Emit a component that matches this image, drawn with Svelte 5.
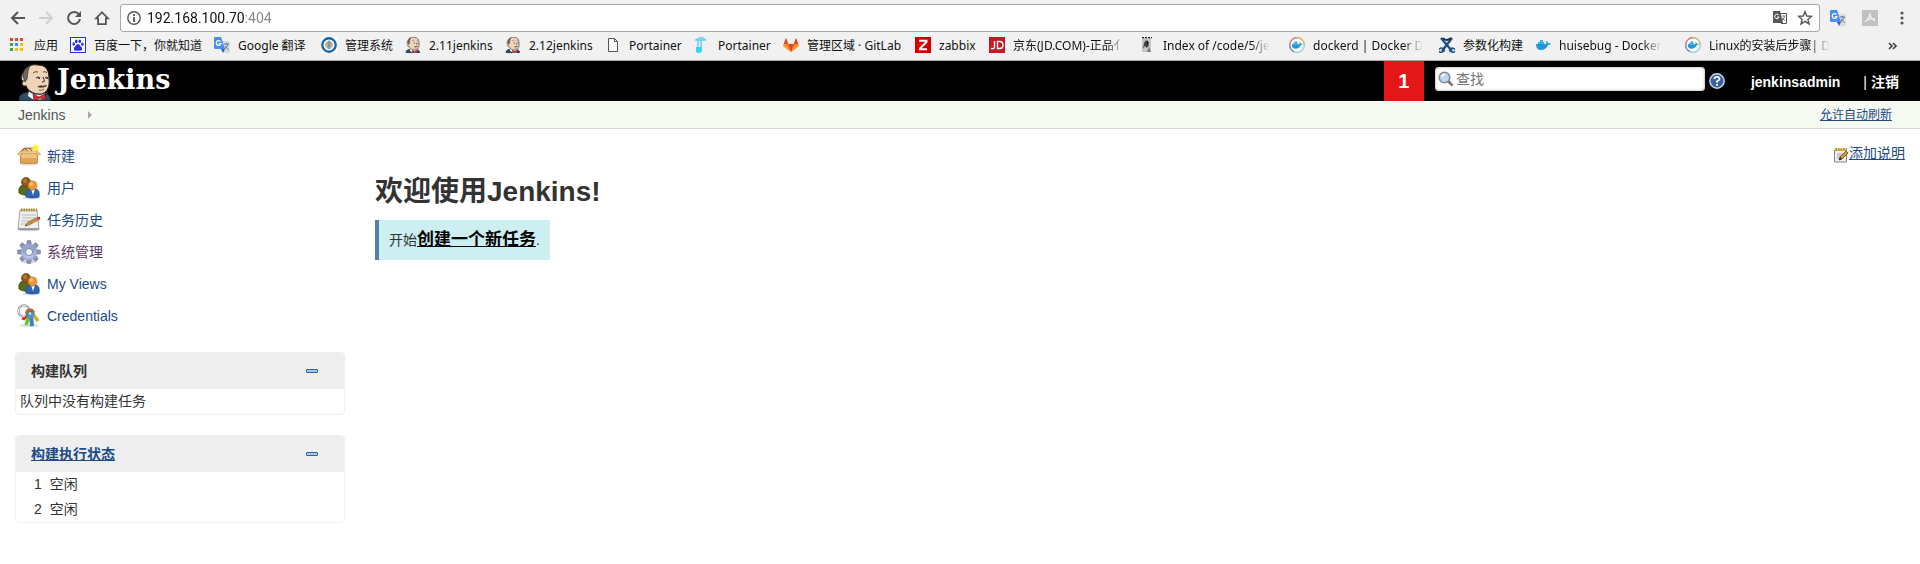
<script>
  const bookmarks = [
    { icon: 'apps', label: '应用', width: 60 },
    { icon: 'baidu', label: '百度一下，你就知道', width: 144 },
    { icon: 'translate', label: 'Google 翻译', width: 107 },
    { icon: 'badge', label: '管理系统', width: 84 },
    { icon: 'jenkins', label: '2.11jenkins', width: 100 },
    { icon: 'jenkins', label: '2.12jenkins', width: 100 },
    { icon: 'page', label: 'Portainer', width: 89 },
    { icon: 'portainer', label: 'Portainer', width: 89 },
    { icon: 'gitlab', label: '管理区域 · GitLab', width: 132 },
    { icon: 'zabbix', label: 'zabbix', width: 74 },
    { icon: 'jd', label: '京东(JD.COM)-正品亻', width: 150, fade: true },
    { icon: 'photo', label: 'Index of /code/5/je', width: 150, fade: true },
    { icon: 'dockerRing', label: 'dockerd | Docker D', width: 150, fade: true },
    { icon: 'tools', label: '参数化构建', width: 96 },
    { icon: 'docker', label: 'huisebug - Docker', width: 150, fade: true },
    { icon: 'dockerRing', label: 'Linux的安装后步骤| D', width: 150, fade: true }
  ];
  const tasks = [
    { icon: 'box', label: '新建' },
    { icon: 'users', label: '用户' },
    { icon: 'notepad', label: '任务历史' },
    { icon: 'gear', label: '系统管理', visited: true },
    { icon: 'users', label: 'My Views' },
    { icon: 'keys', label: 'Credentials' }
  ];
  const executors = [1, 2];
  const appColors = ['#ea4335', '#ea4335', '#ea4335', '#34a853', '#4285f4', '#fbbc05', '#34a853', '#fbbc05', '#fbbc05'];
  const teeth = [0, 45, 90, 135, 180, 225, 270, 315];
</script>

{#snippet butler()}
  <path d="M0 37V33Q2 29 9 28L13 33 25 33 27 29Q31 31 32 37Z" fill="#2f4c62" stroke="#16242e" />
  <path d="M10 26L9 32 15 36 25 35 26 28Z" fill="#fff" />
  <path d="M4 17C1 16 2 10 5 8C6 2 13 0 19 1C27 1 30 6 30 14C31 22 29 28 23 30C16 31 9 28 7 22C3 23 2 19 4 17Z" fill="#efd4b8" stroke="#231f20" stroke-width="1.2" />
  <path d="M5 15C2 10 5 5 11 2C8 7 9 11 8 15L6 18Z" fill="#6b6862" stroke="#302d2a" stroke-width=".7" />
  <path d="M14 9Q16 7 19 8M24 8Q27 7 28 9" fill="none" stroke="#5b4638" />
  <path d="M17 14Q19 12 21 14M26 14Q27 12 29 14M24 13Q27 19 23 18" fill="none" stroke="#231f20" stroke-width="1" />
  <circle cx="20" cy="14.4" r=".7" /><circle cx="28" cy="14.4" r=".7" />
  <path d="M18 23Q22 20 24 22Q27 20 28 22Q24 25 18 23Z" fill="#49413c" />
  <path d="M20 26Q23 27 25 25" fill="none" stroke="#8b5e42" />
  <path d="M14 30L20 33 26 30 27 36 21 34 15 37Z" fill="#d52b31" stroke="#6d1117" stroke-width=".7" />
{/snippet}

{#snippet whale()}
  <path d="M1 7H11Q12 6 11 4Q13 4 13 6Q15 6 16 7Q15 8 13 8Q11 13 6 13Q1 13 1 7Z" fill="#2398d6" />
  <path d="M3 5H9V7H3ZM5 3H8V5H5Z" fill="#35b5e5" />
{/snippet}

{#snippet translate()}
  <path d="M6 4H15Q16 4 16 5V15L15 16H9Z" fill="#d8dbdf" />
  <path d="M1 0H7L11 12H1Q0 12 0 11V1Q0 0 1 0Z" fill="#4b8df8" />
  <path d="M7 12H11L9 16Z" fill="#2e5fc4" />
  <path d="M6.5 4.4A2.4 2.4 0 1 0 7 6.5H4.8" fill="none" stroke="#fff" stroke-width="1.2" />
  <path d="M10 7H15M12.5 6V7M14 7Q13 10 10.5 12M11 9Q12 11 14.5 12.5" fill="none" stroke="#66737d" />
{/snippet}

{#snippet favicon(name)}
  <svg class="favicon" viewBox={name === 'jenkins' ? '-1 0 34 37' : '0 0 16 16'} aria-hidden="true">
    {#if name === 'apps'}
      {#each appColors as color, i}
        <rect x={(i % 3) * 5} y={1 + Math.floor(i / 3) * 5} width="3" height="3" fill={color} />
      {/each}
    {:else if name === 'baidu'}
      <rect x=".5" y=".5" width="15" height="15" fill="#fff" stroke="#2932e1" />
      <g fill="#2932e1"><ellipse cx="3.7" cy="7" rx="1.3" ry="1.8" /><ellipse cx="6.3" cy="4.3" rx="1.3" ry="1.9" /><ellipse cx="9.8" cy="4.3" rx="1.3" ry="1.9" /><ellipse cx="12.4" cy="7.2" rx="1.3" ry="1.8" /><path d="M8 7Q9.4 7 10.5 9Q13 11 12 12.7Q11 14.4 8 13.6Q5 14.4 4 12.7Q3 11 5.5 9Q6.6 7 8 7Z" /></g>
    {:else if name === 'translate'}
      {@render translate()}
    {:else if name === 'badge'}
      <rect width="16" height="16" fill="#fff" /><circle cx="8" cy="8" r="6.7" fill="#fff" stroke="#1565a9" stroke-width="2.4" />
      <circle cx="8" cy="8" r="4" fill="#a8cde9" /><path d="M4.5 8L8 5L11.5 8M6 10L8 8L10 10" fill="none" stroke="#de8752" stroke-width="1.4" /><path d="M8 3.5V12" stroke="#3b86bf" />
    {:else if name === 'jenkins'}
      {@render butler()}
    {:else if name === 'page'}
      <path d="M3.5 1.5H9.5L12.5 4.5V14.5H3.5ZM9.5 1.5V4.5H12.5" fill="#fafafa" stroke="#555" />
    {:else if name === 'portainer'}
      <path d="M1 3H12M7 0L12 3M7 0L2 3M7 1V10M4 3V10" fill="none" stroke="#62cef4" stroke-width="1.4" />
      <path d="M2 10H8V13Q8 16 5 16Q1 16 2 12Z" fill="#36d5fb" />
    {:else if name === 'gitlab'}
      <path d="M0 9L3 1 5.2 7H10.8L13 1 16 9 8 15Z" fill="#fc8b26" /><path d="M5.2 7H10.8L8 15Z" fill="#e24329" /><path d="M3 1L5.2 7H.8ZM13 1L15.2 7H10.8Z" fill="#e24329" /><path d="M0 9L.8 7 8 15ZM16 9L15.2 7 8 15Z" fill="#fca326" />
    {:else if name === 'zabbix'}
      <rect width="16" height="16" fill="#d40000" /><path d="M4 3.8H11.5V5L5 11.5V12.3H12" fill="none" stroke="#fff" stroke-width="1.9" />
    {:else if name === 'jd'}
      <rect width="16" height="16" fill="#c81623" /><path d="M5.5 4V10Q5.5 12 2 11.5M8.5 4.5V11.5H10.5Q14 11.5 14 8T10.5 4.5Z" fill="none" stroke="#fff" stroke-width="1.4" />
    {:else if name === 'photo'}
      <rect x="3" y="1" width="9" height="14" fill="#c4c6c8" /><path d="M3 .7H13" stroke="#222" stroke-width="1.2" stroke-dasharray="2 1" /><path d="M5 6L7 3 10 8 8 11 6 9 4 12Z" fill="#444" /><path d="M8 3L10 6 8 8Z" fill="#111" /><path d="M10 10L12 15H8Z" fill="#777" />
    {:else if name === 'docker'}
      {@render whale()}
    {:else if name === 'dockerRing'}
      <circle cx="8" cy="8" r="7.3" fill="#fff" stroke="#73ccdc" stroke-width="1.2" />
      <path d="M8 .7A7.3 7.3 0 0 1 15.3 8" fill="none" stroke="#f4b14c" stroke-width="1.3" /><path d="M8 .7A7.3 7.3 0 0 0 .7 8" fill="none" stroke="#e96f7b" stroke-width="1.3" /><path d="M.7 8A7.3 7.3 0 0 0 5 14.7" fill="none" stroke="#9374cf" stroke-width="1.3" />
      <g transform="translate(2 2) scale(.75)">{@render whale()}</g>
    {:else if name === 'tools'}
      <path d="M2 1L13 14M13 1L3 14" stroke="#205081" stroke-width="2.4" /><path d="M0 12.5Q2 10 4.5 12T3 15Q1 16 0 14M16 12.5Q14 10 11.5 12T13 15Q15 16 16 14" fill="none" stroke="#205081" stroke-width="1.5" /><path d="M4 1Q7 5 12 1" fill="none" stroke="#123354" stroke-width="2" />
    {/if}
  </svg>
{/snippet}

{#snippet taskIcon(name)}
  <svg class="task-icon" viewBox="0 0 24 24" aria-hidden="true">
    {#if name === 'box'}
      <ellipse cx="12" cy="20" rx="9" ry="1.6" fill="#ddd" />
      <path d="M4 7L7 4H18L20 7V9H4Z" fill="#b77a35" stroke="#a66b2a" stroke-width=".7" /><path d="M6 7L8 5H17L18 7Z" fill="#f0dab4" /><path d="M8 5L11 7M13 5L15 7" stroke="#6f6048" />
      <path d="M3.5 9H20.5V19Q12 20 3.5 19Z" fill="#e4a350" stroke="#b97731" stroke-width=".7" /><path d="M4 9.4H20V14H4Z" fill="#f0c180" />
      <path d="M4 7L.5 10 4 11.5 5 9ZM20 7L23.5 10 20 11.5 19 9Z" fill="#f5ce91" stroke="#b97731" stroke-width=".6" /><path d="M4 7H20L20 9.5H4Z" fill="#f3c98d" stroke="#c08a49" stroke-width=".5" />
      <circle cx="18.5" cy="4" r="3.8" fill="#fff35b" opacity=".6" /><circle cx="18.5" cy="4" r="2.2" fill="#fff51b" />
    {:else if name === 'users'}
      <ellipse cx="14" cy="22" rx="9" ry="1.4" fill="#ddd" />
      <path d="M2 17Q1 10 6 9H12L15 18Q8 21 2 17Z" fill="#596a20" stroke="#36470b" stroke-width=".8" /><circle cx="9" cy="6" r="4.5" fill="#8f571c" stroke="#6e3c0b" stroke-width=".7" /><circle cx="8" cy="5" r="2" fill="#b57934" />
      <path d="M9 21Q8 14 13 13H19Q23 14 22 21Q15 23 9 21Z" fill="#2c67b1" stroke="#1e4c8d" stroke-width=".8" /><path d="M14 13L16 19 18 13Z" fill="#fff" /><circle cx="15.5" cy="9.5" r="4.5" fill="#ec9637" stroke="#c66c16" stroke-width=".7" /><circle cx="14.5" cy="8" r="2" fill="#ffbd68" />
    {:else if name === 'notepad'}
      <ellipse cx="12" cy="22" rx="11" ry="1.2" fill="#ccc" />
      <path d="M3 2H20L22 21H1Z" fill="#eee" stroke="#a5a5a5" /><path d="M1 21H22" stroke="#777" /><path d="M4 2H20" stroke="#ab8e20" stroke-width="3" stroke-dasharray="1.5 1" /><path d="M5 7H19M5 10H19M4 13H14M4 16H12" stroke="#b9b9b9" />
      <path d="M8 18L11 14 21 9 23 11 12 17Z" fill="#c98d3b" stroke="#8d642c" stroke-width=".6" /><path d="M20 9L23 9 23 11 21 12Z" fill="#d73535" /><path d="M8 18L9 16.5 10 17.3Z" fill="#4c3e27" />
    {:else if name === 'gear'}
      <ellipse cx="12" cy="21.5" rx="8" ry="1.8" fill="#d5d5d5" />
      {#each teeth as angle}<path d="M10.3 .6H13.7L14.5 6H9.5Z" fill="#8693bd" stroke="#6f7d9f" stroke-width=".7" transform={`rotate(${angle} 12 12)`} />{/each}
      <circle cx="12" cy="12" r="8" fill="#aab3d8" /><path d="M4 12A8 8 0 0 1 20 12" fill="#909ec5" opacity=".7" /><path d="M6 15Q12 21 18 15Q12 17 6 15Z" fill="#c6c4e5" />
      <circle cx="12" cy="12" r="3.5" fill="#fff" stroke="#7886ae" />
    {:else if name === 'keys'}
      <ellipse cx="12" cy="21.5" rx="10" ry="1.6" fill="#ddd" />
      <circle cx="7" cy="7" r="5.6" fill="none" stroke="#888" stroke-width="2.2" /><circle cx="7" cy="7" r="5.6" fill="none" stroke="#eee" />
      <path d="M15 9L21 17" stroke="#ccae2c" stroke-width="3.4" /><path d="M14 9L7 15 5 14" fill="none" stroke="#ca352b" stroke-width="2.6" /><path d="M12 12L9 21" stroke="#63c52b" stroke-width="3.4" /><path d="M14 12L15 22" stroke="#3d80bf" stroke-width="4" />
      <circle cx="13" cy="9" r="4.5" fill="#3f8b43" /><path d="M9 9A4.5 4.5 0 0 1 17 8" fill="none" stroke="#d65c25" stroke-width="2" /><circle cx="13.5" cy="11" r="3.3" fill="#5594c9" /><circle cx="13" cy="9.5" r="1" fill="#fff" />
    {/if}
  </svg>
{/snippet}

{#snippet collapse()}
  <button class="collapse" type="button" aria-label="−"><svg viewBox="0 0 12 4" aria-hidden="true"><rect x=".5" y=".5" width="11" height="3" rx=".5" fill="#a9c9e6" stroke="#2d63a3" /></svg></button>
{/snippet}

<div class="browser">
  <div class="toolbar">
    <div class="nav">
      <button type="button" aria-label="←"><svg viewBox="0 0 16 16"><path d="M15 8H2M8 2L2 8L8 14" fill="none" stroke="#555" stroke-width="2" /></svg></button>
      <button type="button" aria-label="→" disabled><svg viewBox="0 0 16 16"><path d="M1 8H14M8 2L14 8L8 14" fill="none" stroke="#d0d0d0" stroke-width="2" /></svg></button>
      <button type="button" aria-label="↻"><svg viewBox="0 0 16 16"><path d="M13 4.5A6 6 0 1 0 14 9" fill="none" stroke="#555" stroke-width="2" /><path d="M15 1V7H9Z" fill="#555" /></svg></button>
      <button type="button" aria-label="⌂"><svg viewBox="0 0 16 16"><path d="M0 9.2L8 1L16 9.2H12.8V15H3.2V9.2ZM4 7.6H5V13.2H11V7.6H12L8 3.6Z" fill="#555" fill-rule="evenodd" /></svg></button>
    </div>
    <div class="address">
      <svg class="info" viewBox="0 0 14 14" aria-hidden="true"><circle cx="7" cy="7" r="6.2" fill="none" stroke="#555" stroke-width="1.4" /><path d="M7 6V11M7 3V5" stroke="#555" stroke-width="1.8" /></svg>
      <input type="text" value="192.168.100.70:404" aria-label="URL" spellcheck="false" />
      <button type="button" aria-label="翻译"><svg viewBox="0 0 16 16"><path d="M7 3.5H14.5V13.5H9" fill="#fff" stroke="#555" /><path d="M1 1H8L11 13H2Q1 13 1 12Z" fill="#555" /><path d="M6.5 5A2.2 2.2 0 1 0 7 7H5" fill="none" stroke="#fff" /><path d="M9.5 6H13.5M12.5 6Q12 9 10 10M10 8L13 11" fill="none" stroke="#777" /></svg></button>
      <button type="button" aria-label="☆"><svg viewBox="0 0 16 16"><path d="M8 1.8L9.8 6 14.3 6.4 10.9 9.4 12 13.9 8 11.4 4 13.9 5.1 9.4 1.7 6.4 6.2 6Z" fill="none" stroke="#555" stroke-width="1.4" /></svg></button>
    </div>
    <div class="extensions">
      <button type="button" aria-label="Google 翻译"><svg viewBox="0 0 16 16">{@render translate()}</svg></button>
      <button type="button" aria-label="PDF"><svg viewBox="0 0 16 16"><rect width="16" height="16" fill="#c1c1c1" /><path d="M8 3Q8 8 3 12M8 4Q8 8 13 11M4 11Q8 8 13 9" fill="none" stroke="#f3f3f3" stroke-width="1.2" /></svg></button>
      <button type="button" aria-label="⋮"><svg viewBox="0 0 16 16"><g fill="#555"><circle cx="8" cy="3" r="1.6" /><circle cx="8" cy="8" r="1.6" /><circle cx="8" cy="13" r="1.6" /></g></svg></button>
    </div>
  </div>
  <nav class="bookmarks">
    {#each bookmarks as item}
      <a href="#top" style={`flex-basis: ${item.width}px`}>{@render favicon(item.icon)}<span class:fade={item.fade}>{item.label}</span></a>
    {/each}
    <button class="more" type="button" aria-label="»"><svg viewBox="0 0 10 8"><path d="M1 1L4 4L1 7M5 1L8 4L5 7" fill="none" stroke="#444" stroke-width="1.7" /></svg></button>
  </nav>
</div>

<header class="masthead">
  <a class="brand" href="#top"><svg viewBox="0 0 33 37" aria-hidden="true">{@render butler()}</svg><span>Jenkins</span></a>
  <a class="alert" href="#top">1</a>
  <form class="search">
    <svg viewBox="0 0 16 16" aria-hidden="true"><path d="M10 10L14.5 14.5" stroke="#777" stroke-width="2.6" /><circle cx="6.5" cy="6.5" r="5.3" fill="#b9d9f3" stroke="#858b90" stroke-width="1.6" /><path d="M3.5 6Q4 3.5 7 3.5" fill="none" stroke="#fff" stroke-width="1.3" /></svg>
    <input type="text" placeholder="查找" aria-label="查找" />
  </form>
  <a class="help" href="#top" aria-label="?"><svg viewBox="0 0 16 16"><circle cx="8" cy="8" r="7.2" fill="#37629f" stroke="#cddcf0" stroke-width="1.4" /><path d="M5.5 6Q5.5 3.8 8 3.8T10.5 6Q10.5 7.2 8 8.3V9.8M8 11V12.8" fill="none" stroke="#fff" stroke-width="1.8" /></svg></a>
  <a class="user" href="#top">jenkinsadmin</a>
  <div class="logout"><span>|</span><a href="#top">注销</a></div>
</header>

<nav class="breadcrumb">
  <a href="#top">Jenkins</a>
  <svg viewBox="0 0 4 8" aria-hidden="true"><path d="M0 0L4 4L0 8Z" fill="#aaa" /></svg>
  <a class="refresh" href="#top">允许自动刷新</a>
</nav>

<div class="page">
  <aside>
    <nav class="tasks">
      {#each tasks as task}
        <a href="#top" class:visited={task.visited}>{@render taskIcon(task.icon)}<span>{task.label}</span></a>
      {/each}
    </nav>
    <section class="panel">
      <h2><span>构建队列</span>{@render collapse()}</h2>
      <p>队列中没有构建任务</p>
    </section>
    <section class="panel">
      <h2><a href="#top">构建执行状态</a>{@render collapse()}</h2>
      <table>
        <tbody>
          {#each executors as n}<tr><td>{n}</td><td>空闲</td></tr>{/each}
        </tbody>
      </table>
    </section>
  </aside>
  <main>
    <a class="describe" href="#top">
      <svg viewBox="0 0 16 16" aria-hidden="true"><path d="M1.5 3H13.5V15H1.5Z" fill="#eee" stroke="#888" /><path d="M2 2.5H14" stroke="#c9a022" stroke-width="3" stroke-dasharray="2 .7" /><path d="M4 7H10M4 9H8M4 11H7" stroke="#aaa" /><path d="M6 13L7 10 13 4 15 6 9 12Z" fill="#d49a39" stroke="#614318" stroke-width=".8" /><path d="M6 13L7 10 9 12Z" fill="#2d2920" /></svg><span>添加说明</span>
    </a>
    <h1>欢迎使用Jenkins!</h1>
    <div class="callout">开始<a href="#top">创建一个新任务</a>.</div>
  </main>
</div>

<style>
  :global(body) {
    margin: 0;
    background: #fff;
    color: #333;
    font: 14px/20px "Liberation Sans", "Noto Sans CJK SC", sans-serif;
  }
  button {
    display: block;
    padding: 0;
    border: 0;
    background: none;
  }
  svg { display: block; flex: none; }
  input { min-width: 0; outline: 0; }
  a { color: #204a87; }

  .browser {
    background: #f1f1f1;
    border-bottom: 1px solid #a8a8a8;
  }
  .toolbar {
    display: flex;
    align-items: center;
    padding: 4px 10px 0;
  }
  .nav { display: flex; gap: 12px; }
  .nav svg, .address button svg, .extensions svg { width: 16px; height: 16px; }
  .address {
    box-sizing: border-box;
    display: flex;
    flex: 1;
    align-items: center;
    height: 28px;
    margin-left: 10px;
    padding: 0 6px;
    border: 1px solid #a9a9a9;
    border-radius: 3px;
    background: #fff;
  }
  .info { width: 14px; height: 14px; margin-right: 6px; }
  .address input {
    flex: 1;
    height: 20px;
    padding: 0;
    border: 0;
    background: linear-gradient(90deg, #111 97px, #888 97px);
    background-clip: text;
    color: transparent;
    font: 14px/20px Roboto, sans-serif;
  }
  .address button + button { margin-left: 9px; }
  .extensions { display: flex; gap: 16px; margin-left: 10px; }

  .bookmarks {
    display: flex;
    align-items: center;
    height: 28px;
    padding: 0 22px 0 10px;
  }
  .bookmarks a {
    display: flex;
    flex: 0 0 auto;
    gap: 8px;
    box-sizing: border-box;
    min-width: 0;
    padding-right: 8px;
    color: #111;
    font: 12px/18px "Noto Sans", "Noto Sans CJK SC", sans-serif;
    text-decoration: none;
    white-space: nowrap;
  }
  .bookmarks .fade { mask-image: linear-gradient(90deg, #000 calc(100% - 20px), transparent); }
  .favicon { width: 16px; height: 16px; }
  .more { margin-left: auto; }
  .more svg { width: 10px; height: 8px; }

  .masthead {
    display: flex;
    align-items: flex-start;
    height: 40px;
    padding: 0 21px 0 19px;
    background: #000;
    overflow: hidden;
  }
  .masthead a { color: #fff; text-decoration: none; }
  .brand {
    display: flex;
    gap: 5px;
    margin-right: auto;
    font: bold 27px/38px "DejaVu Serif", serif;
  }
  .brand svg { width: 33px; height: 37px; margin-top: 3px; }
  .alert {
    width: 40px;
    background: #e31717;
    font-size: 20px;
    font-weight: bold;
    line-height: 40px;
    text-align: center;
  }
  .search {
    box-sizing: border-box;
    display: flex;
    align-items: center;
    width: 270px;
    height: 24px;
    margin: 6px 4px 0 11px;
    padding: 0 3px;
    border-radius: 4px;
    background: #fff;
    box-shadow: inset 0 0 3px #999;
  }
  .search svg, .help svg { width: 16px; height: 16px; }
  .search input {
    flex: 1;
    padding: 0 2px;
    border: 0;
    background: transparent;
    font: 14px/20px "Liberation Sans", "Noto Sans CJK SC", sans-serif;
  }
  .search input::placeholder { color: #757575; }
  .help { margin-top: 12px; }
  .user, .logout { margin-top: 11px; font-weight: bold; }
  .user { margin-left: 26px; }
  .logout { display: flex; gap: 4px; margin-left: 23px; color: #fff; }
  .logout span { font-weight: normal; }

  .breadcrumb {
    display: flex;
    align-items: center;
    height: 27px;
    padding: 0 28px 0 18px;
    border-bottom: 1px solid #d3d7cf;
    background: #f6faf2;
  }
  .breadcrumb a { color: #555; text-decoration: none; }
  .breadcrumb svg { width: 4px; height: 8px; margin-left: 23px; }
  .breadcrumb .refresh {
    margin-left: auto;
    color: #204a87;
    font-size: 12px;
    text-decoration: underline;
  }

  .page { display: flex; gap: 30px; padding: 11px 15px 40px; }
  aside { flex: 0 0 330px; }
  .tasks { margin-bottom: 20px; }
  .tasks a {
    display: flex;
    align-items: center;
    gap: 6px;
    height: 32px;
    padding-left: 2px;
    text-decoration: none;
  }
  .tasks .visited { color: #5c3566; }
  .task-icon { width: 24px; height: 24px; }
  .panel {
    margin-bottom: 20px;
    border: 1px solid #eee;
    border-radius: 4px;
    overflow: hidden;
  }
  h2 {
    display: flex;
    align-items: center;
    justify-content: space-between;
    height: 36px;
    margin: 0;
    padding: 0 26px 0 15px;
    background: #eee;
    font-size: 14px;
    line-height: 20px;
  }
  .collapse svg { width: 12px; height: 4px; }
  .panel p { margin: 0; padding: 2px 4px 3px; }
  table { border-spacing: 0; }
  td { height: 23px; padding: 0 0 2px 8px; }
  td:first-child { padding-left: 18px; }

  main { display: flex; flex: 1; flex-direction: column; align-items: flex-start; min-width: 0; }
  .describe { display: flex; align-self: flex-end; margin-top: 3px; }
  .describe svg { width: 16px; height: 16px; margin-top: 4px; }
  h1 {
    margin: 11px 0 10px;
    font-size: 28px;
    line-height: 36px;
  }
  .callout {
    padding: 10px;
    border-left: 4px solid #567bb0;
    background: #cdeff2;
    line-height: 20px;
  }
  .callout a { color: #000; font-size: 17px; font-weight: bold; }
</style>
